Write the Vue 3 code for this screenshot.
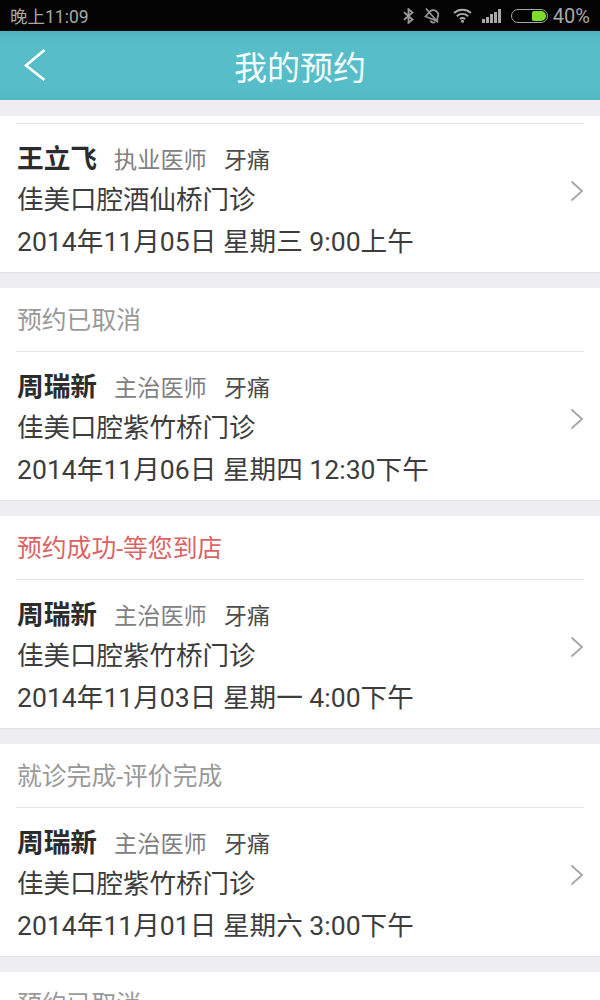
<template>
  <div class="page">
    <div class="status-bar">
      <span class="status-bar__time">晚上11:09</span>
      <div class="status-bar__icons">
        <svg width="11" height="16" viewBox="0 0 11 16" class="icon icon--bt">
          <path d="M1 4.200l8.500 7.300-4 3.300V1.200l4 3.300L1 11.800" fill="none" stroke="#9a9a9a" stroke-width="1.800" />
        </svg>
        <svg width="20" height="17" viewBox="0 0 20 17" class="icon icon--mute">
          <path d="M2.500 9.500L6 5.500c2-2.500 5-3 7-1.500s3 4 1.500 6.500l-.5 3.500-11.500-4.500zM7.500 13.500c.5 2 3 2.700 4.500 1.500M3 1.500l12 14" fill="none" stroke="#969696" stroke-width="1.800" />
        </svg>
        <svg width="19" height="15" viewBox="0 0 19 15" class="icon icon--wifi">
          <path d="M1 5c5-4.300 12-4.300 17 0M3.800 8.200c3.400-2.900 8-2.900 11.400 0M6.800 11c1.600-1.200 3.800-1.200 5.400 0" fill="none" stroke="#aaa" stroke-width="2" />
          <circle cx="9.500" cy="13.300" r="1.500" fill="#aaa" />
        </svg>
        <div class="signal">
          <i v-for="h in signalBars" :key="h" class="signal__bar" :style="{ height: h + 'px' }"></i>
        </div>
        <div class="battery"><div class="battery__fill"></div></div>
        <span class="status-bar__percent">40%</span>
      </div>
    </div>

    <header class="topbar">
      <svg class="topbar__back" width="24" height="34" viewBox="0 0 24 34">
        <path d="M21.500 2L3 17.500 21.500 32" fill="none" stroke="#fff" stroke-width="2.600" />
      </svg>
      <h1 class="topbar__title">我的预约</h1>
    </header>

    <div class="list">
      <section v-for="item in items" :key="item.date" class="card">
        <div class="card__head" :class="{ 'card__head--clipped': !item.status, 'card__head--alert': item.alert }">{{ item.status }}</div>
        <div class="card__body">
          <div class="card__info">
            <div class="card__doctor">
              <span class="card__name">{{ item.name }}</span>
              <span class="card__meta card__meta--title">{{ item.title }}</span>
              <span class="card__meta">牙痛</span>
            </div>
            <div class="card__clinic">{{ item.clinic }}</div>
            <div class="card__date">{{ item.date }}</div>
          </div>
          <svg class="card__arrow" width="14" height="22" viewBox="0 0 14 22">
            <path d="M1.500 1.500L12 11 1.500 20.500" fill="none" stroke="#a5a5a5" stroke-width="1.800" />
          </svg>
        </div>
      </section>
      <section class="card">
        <div class="card__head">预约已取消</div>
      </section>
    </div>
  </div>
</template>

<script setup>
const signalBars = [4, 6, 9, 11, 14];

const items = [
  { status: '', name: '王立飞', title: '执业医师', clinic: '佳美口腔酒仙桥门诊', date: '2014年11月05日 星期三 9:00上午' },
  { status: '预约已取消', name: '周瑞新', title: '主治医师', clinic: '佳美口腔紫竹桥门诊', date: '2014年11月06日 星期四 12:30下午' },
  { status: '预约成功-等您到店', alert: true, name: '周瑞新', title: '主治医师', clinic: '佳美口腔紫竹桥门诊', date: '2014年11月03日 星期一 4:00下午' },
  { status: '就诊完成-评价完成', name: '周瑞新', title: '主治医师', clinic: '佳美口腔紫竹桥门诊', date: '2014年11月01日 星期六 3:00下午' }
];
</script>

<style>
html,
body {
  margin: 0;
  background: #fff;
}
</style>

<style scoped>
.page {
  width: 600px;
  height: 1000px;
  overflow: hidden;
  background: #eeeef2;
  font-family: Roboto, "Noto Sans CJK SC", sans-serif;
}
.status-bar {
  display: flex;
  align-items: center;
  justify-content: space-between;
  height: 31px;
  padding: 0 10px;
  box-sizing: border-box;
  background: #030303;
  color: #a9a9a9;
}
.status-bar__time {
  font-size: 17.500px;
}
.status-bar__icons {
  display: flex;
  align-items: center;
}
.status-bar__percent {
  margin-left: 5px;
  font-size: 20px;
}
.icon--bt {
  margin-right: 9px;
}
.icon--mute {
  margin-right: 10px;
}
.icon--wifi {
  margin-right: 10px;
}
.signal {
  display: flex;
  align-items: flex-end;
  gap: 1px;
  height: 14px;
  margin-right: 10px;
}
.signal__bar {
  display: block;
  width: 3px;
  background: #a8a8a8;
}
.battery {
  display: flex;
  justify-content: flex-end;
  box-sizing: border-box;
  width: 37px;
  height: 14px;
  padding: 1px;
  border: 1px solid #a8a8a8;
  border-radius: 7px;
}
.battery__fill {
  width: 14px;
  background: #7ddc2e;
  border-radius: 2px 6px 6px 2px;
}
.topbar {
  position: relative;
  display: flex;
  align-items: center;
  justify-content: center;
  height: 69px;
  background: linear-gradient(#4fb2be, #57bec9 18%, #57bec9 82%, #52b8c4);
}
.topbar__back {
  position: absolute;
  left: 23px;
  top: 17px;
}
.topbar__title {
  margin: 0;
  color: #f4fbfc;
  font-size: 33px;
  font-weight: 400;
}
.list {
  display: flex;
  flex-direction: column;
  gap: 16px;
  padding-top: 16px;
}
.card {
  background: #fff;
  box-shadow: 0 1px 0 #e2e2e4;
}
.card__head {
  height: 63px;
  margin: 0 16px 0 16px;
  padding-left: 1px;
  border-bottom: 1px solid #e6e6e6;
  font-size: 24.800px;
  line-height: 66px;
  color: #999;
}
.card__head--clipped {
  height: 7px;
}
.card__head--alert {
  color: #db6364;
}
.card__body {
  display: flex;
  align-items: center;
  justify-content: space-between;
  height: 148px;
  padding: 0 16px 0 17px;
}
.card__info {
  display: flex;
  flex-direction: column;
  height: 148px;
  color: #3d3d3d;
}
.card__doctor {
  display: flex;
  align-items: baseline;
  height: 40px;
  margin-top: 15px;
  line-height: 40px;
}
.card__name {
  font-size: 26.700px;
  font-weight: 700;
  color: #2c2c2c;
}
.card__meta {
  font-size: 23.200px;
  color: #4d4d4d;
}
.card__meta--title {
  margin: 0 17px;
  color: #808080;
}
.card__clinic {
  height: 42px;
  font-size: 26.500px;
  line-height: 42px;
}
.card__date {
  font-size: 26.600px;
  line-height: 41px;
  white-space: nowrap;
}
.card__arrow {
  margin-bottom: 14px;
}
</style>
